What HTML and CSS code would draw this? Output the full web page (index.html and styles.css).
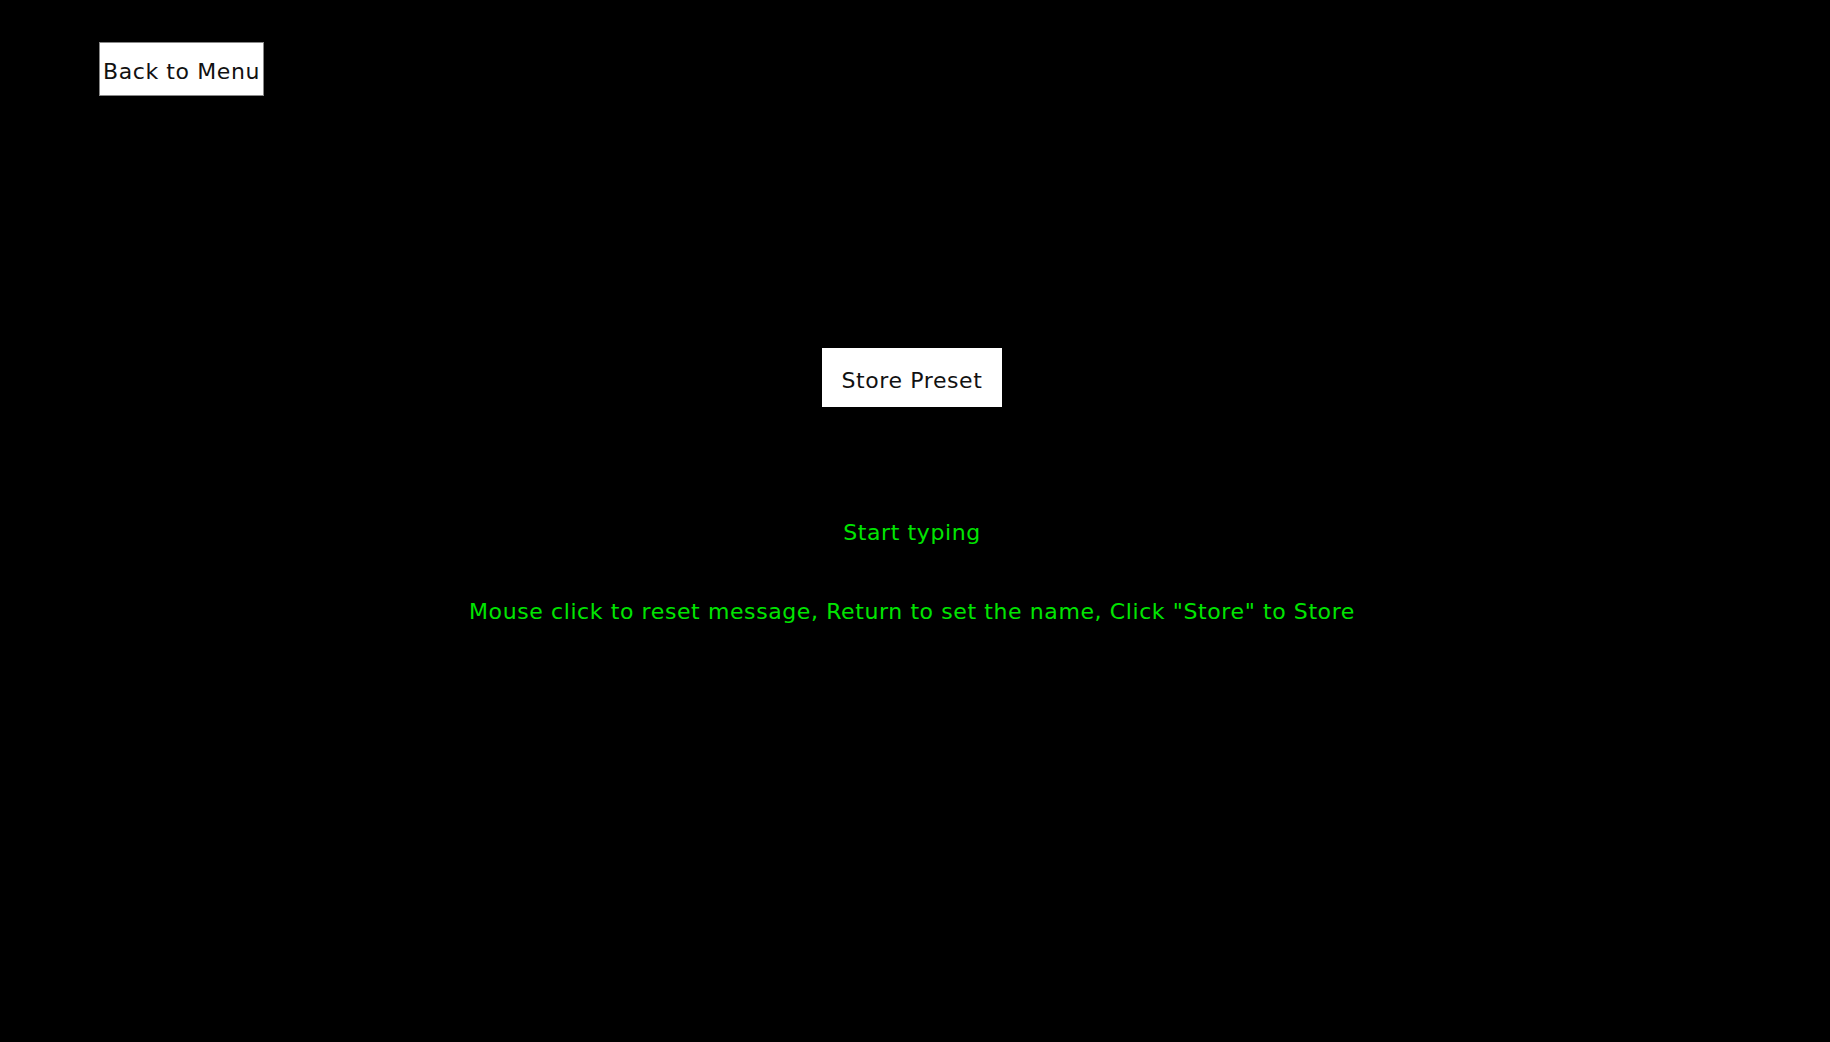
FILE: index.html
```html
<!DOCTYPE html>
<html>
<head>
<meta charset="utf-8">
<link rel="stylesheet" href="styles.css">
</head>
<body>
<div class="page">
  <div class="topbar">
    <button class="btn back">Back to Menu</button>
  </div>
  <div class="center">
    <button class="btn store">Store Preset</button>
    <div class="msg first">Start typing</div>
    <div class="msg second">Mouse click to reset message, Return to set the name, Click "Store" to Store</div>
  </div>
</div>
</body>
</html>
```
FILE: styles.css
```css
html, body {
  margin: 0;
  padding: 0;
  background: #000;
  height: 100%;
}
.page {
  width: 1830px;
  height: 1042px;
  display: flex;
  flex-direction: column;
  font-family: "DejaVu Sans", sans-serif;
}
.topbar {
  padding: 42px 0 0 99px;
  display: flex;
}
.btn {
  font-family: "DejaVu Sans", sans-serif;
  font-size: 22px;
  letter-spacing: 0.6px;
  background: #fff;
  color: #111;
  border: none;
  padding: 0;
  margin: 0;
  display: flex;
  align-items: center;
  justify-content: center;
}
.back {
  width: 165px;
  height: 54px;
  border: 1px solid #888;
  box-sizing: border-box;
  padding-top: 4px;
}
.center {
  display: flex;
  flex-direction: column;
  align-items: center;
  padding-right: 6px;
  padding-top: 252px;
}
.store {
  width: 180px;
  height: 59px;
  padding-top: 6px;
}
.msg {
  color: #00e600;
  font-size: 22px;
  letter-spacing: 0.6px;
}
.first {
  margin-top: 113px;
}
.second {
  margin-top: 54px;
}
```
